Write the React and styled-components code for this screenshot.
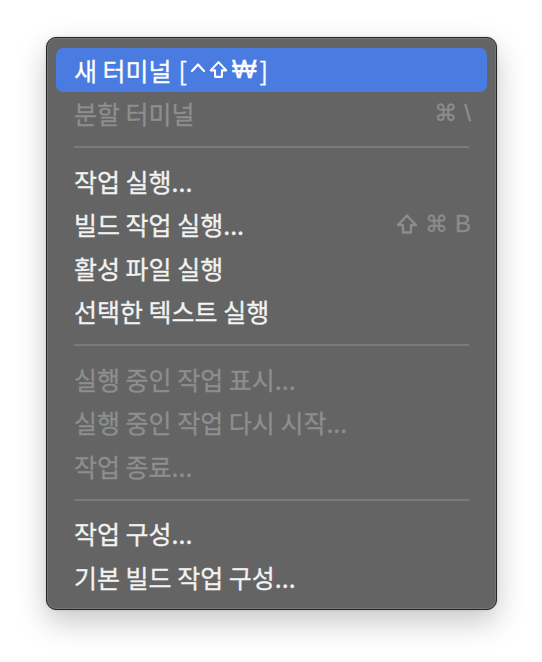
import React from "react";
import styled, { createGlobalStyle } from "styled-components";

const GlobalStyle = createGlobalStyle`
    html, body {
        margin: 0;
        padding: 0;
        background: #ffffff;
    }
`;

const Page = styled.div`
    width: 542px;
    height: 662px;
    box-sizing: border-box;
    padding: 37px 0 0 46px;
`;

const Menu = styled.div`
    width: 451px;
    box-sizing: border-box;
    padding: 10px 9px;
    background: #646464;
    border: 1px solid #262626;
    border-radius: 10px;
    box-shadow: inset 0 0 0 1px #767676, 0 12px 30px rgba(0, 0, 0, 0.22),
        0 0 3px rgba(0, 0, 0, 0.15);
    font-family: "Noto Sans CJK KR", "Noto Sans", sans-serif;
`;

const Item = styled.div`
    display: flex;
    align-items: center;
    justify-content: space-between;
    height: 43.5px;
    padding: 0 16px 0 18px;
    border-radius: 7px;
    font-size: 25px;
    font-weight: 400;
    -webkit-text-stroke: 0.3px currentColor;
    color: ${(p) => (p.$disabled ? "#8e8e8e" : "#f2f2f2")};
    background: ${(p) => (p.$active ? "#4a7be0" : "transparent")};
    ${(p) => p.$active && "color: #ffffff;"}
`;

const Label = styled.span`
    display: flex;
    align-items: center;
    white-space: pre;
`;

const Hint = styled.span`
    display: inline-flex;
    align-items: center;
    gap: 3px;
    margin-left: 7px;

    svg {
        flex-shrink: 0;
    }
`;

const Won = styled.span`
    font-family: "Liberation Sans", sans-serif;
    font-size: 26px;
    margin-left: 1px;
`;

const Shortcut = styled.span`
    display: flex;
    align-items: center;
    gap: 7px;
    color: #8c8c8c;
    font-family: "Liberation Sans", "DejaVu Sans", sans-serif;
    font-size: 24px;
`;

const KeyGlyph = styled.span`
    font-family: "DejaVu Sans", sans-serif;
    font-size: 23px;
`;

const ShiftIcon = ({ color = "#8c8c8c", size = 22 }) => (
    <svg width={size} height={size} viewBox="0 0 22 22" fill="none">
        <path
            d="M11 2.5 L20 12 H15 V19.5 H7 V12 H2 Z"
            stroke={color}
            strokeWidth="2.4"
            strokeLinejoin="round"
        />
    </svg>
);

const ControlIcon = ({ color }) => (
    <svg width="16" height="18" viewBox="0 0 16 18" fill="none">
        <path
            d="M2 10 L8 3.5 L14 10"
            stroke={color}
            strokeWidth="2.2"
            strokeLinecap="round"
            strokeLinejoin="round"
        />
    </svg>
);

const Separator = styled.div`
    height: 2px;
    margin: 11px 18px;
    background: #7a7a7a;
`;

const sections = [
    [
        { label: "새 터미널", active: true, hint: true },
        { label: "분할 터미널", disabled: true, keys: ["⌘", "\\"] }
    ],
    [
        { label: "작업 실행..." },
        { label: "빌드 작업 실행...", keys: ["shift", "⌘", "B"] },
        { label: "활성 파일 실행" },
        { label: "선택한 텍스트 실행" }
    ],
    [
        { label: "실행 중인 작업 표시...", disabled: true },
        { label: "실행 중인 작업 다시 시작...", disabled: true },
        { label: "작업 종료...", disabled: true }
    ],
    [{ label: "작업 구성..." }, { label: "기본 빌드 작업 구성..." }]
];

const renderKey = (k) => {
    if (k === "shift") return <ShiftIcon key={k} />;
    if (k === "⌘") return <KeyGlyph key={k}>{k}</KeyGlyph>;
    return <span key={k}>{k}</span>;
};

export default function App() {
    return (
        <Page>
            <GlobalStyle />
            <Menu>
                {sections.map((items, i) => (
                    <React.Fragment key={i}>
                        {i > 0 && <Separator />}
                        {items.map((item) => (
                            <Item
                                key={item.label}
                                $active={item.active}
                                $disabled={item.disabled}
                            >
                                <Label>
                                    {item.label}
                                    {item.hint && (
                                        <Hint>
                                            [
                                            <ControlIcon color="#ffffff" />
                                            <ShiftIcon color="#ffffff" size={19} />
                                            <Won>₩</Won>]
                                        </Hint>
                                    )}
                                </Label>
                                {item.keys && (
                                    <Shortcut>{item.keys.map(renderKey)}</Shortcut>
                                )}
                            </Item>
                        ))}
                    </React.Fragment>
                ))}
            </Menu>
        </Page>
    );
}
